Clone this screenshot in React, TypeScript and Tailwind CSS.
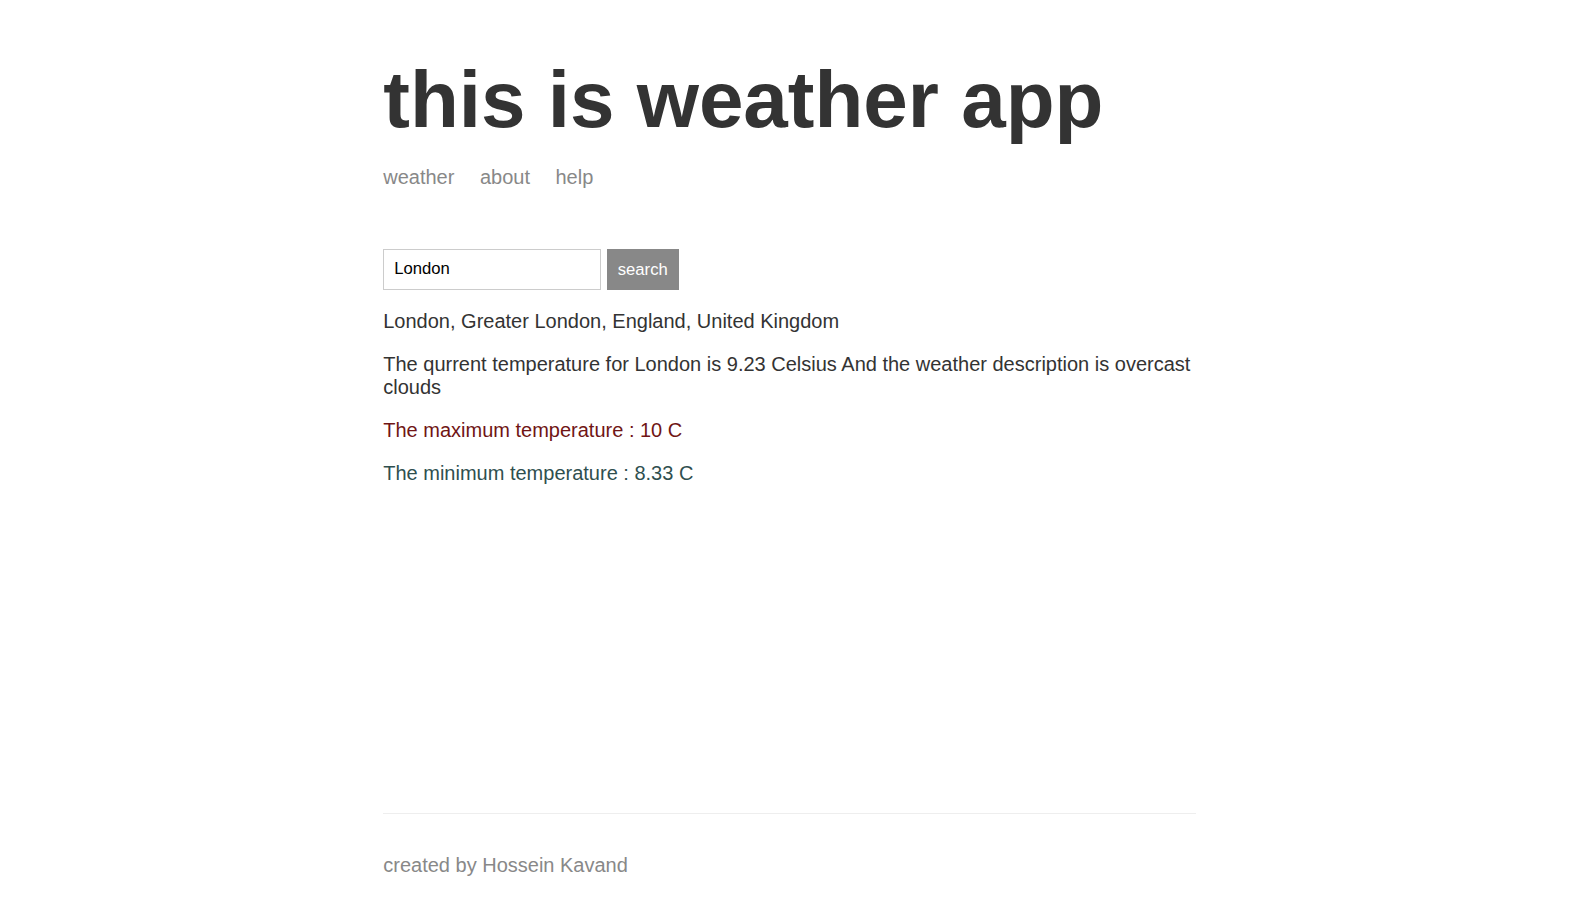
export default function App() {
  return (
    <div className="flex flex-col min-h-screen max-w-[852.5px] mx-auto px-[20px] text-[#333333] text-[20px] font-['Liberation_Sans',Arial,sans-serif]">
      <header className="mb-[60px]">
        <h1 className="text-[80px] font-bold leading-[92px] mt-[53.6px] mb-[20px]">this is weather app</h1>
        <nav className="flex leading-[23px]">
          <a className="text-[#888888] mr-[25.5px]">weather</a>
          <a className="text-[#888888] mr-[25.5px]">about</a>
          <a className="text-[#888888] mr-[25.5px]">help</a>
        </nav>
      </header>

      <main className="flex-grow leading-[23px]">
        <form className="flex items-start gap-[5.5px]">
          <input
            className="border border-[#cccccc] px-[10px] py-[10px] w-[218px] h-[41px] text-[16.67px] text-black outline-none"
            defaultValue="London"
          />
          <button
            type="button"
            className="bg-[#888888] border border-[#888888] text-white px-[10px] h-[41px] text-[16.67px]"
          >
            search
          </button>
        </form>
        <p className="mt-[20px]">London, Greater London, England, United Kingdom</p>
        <p className="mt-[20px]">The qurrent temperature for London is 9.23 Celsius And the weather description is overcast clouds</p>
        <p className="mt-[20px] text-[#701515]">The maximum temperature : 10 C</p>
        <p className="mt-[20px] text-[#2f4f4f]">The minimum temperature : 8.33 C</p>
      </main>

      <footer className="border-t border-[#eeeeee] mt-[20px] py-[20px] text-[#888888] leading-[23px]">
        <p className="my-[20px]">created by Hossein Kavand</p>
      </footer>
    </div>
  )
}
